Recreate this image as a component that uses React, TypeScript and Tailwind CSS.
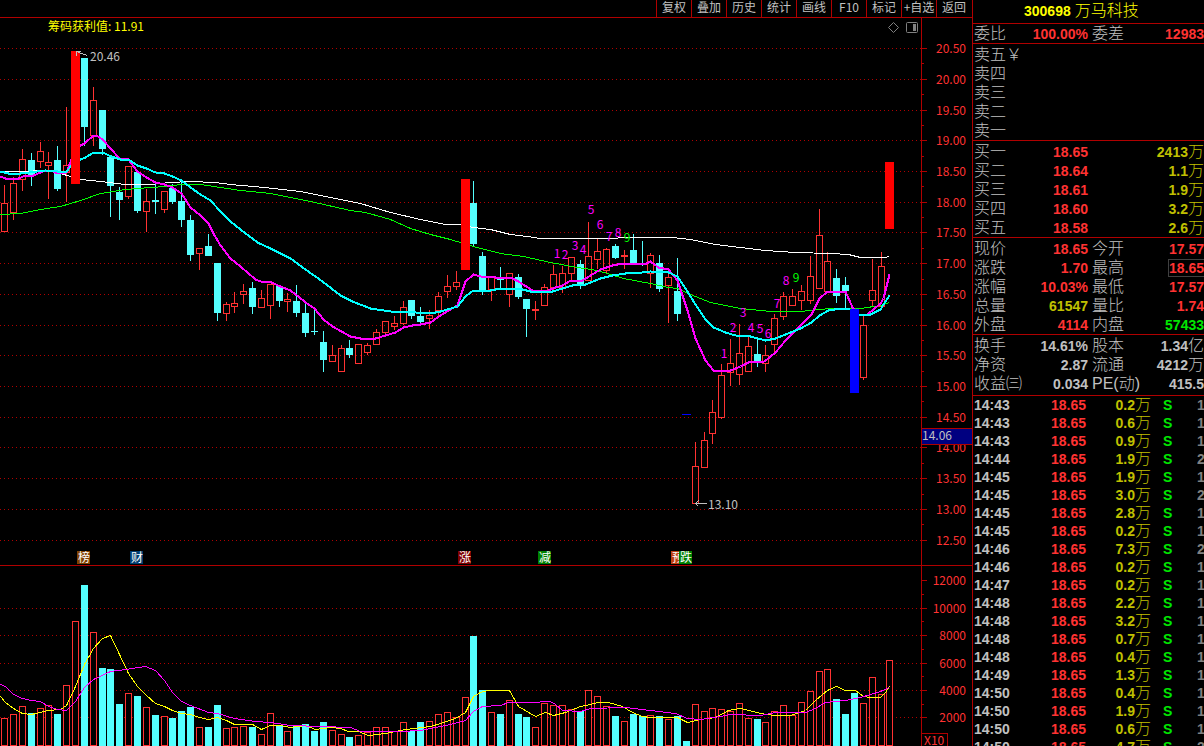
import { Fragment } from 'react'
import clsx from 'clsx'

type Kind = 'up' | 'down' | 'limit' | 'mark'
type Bar = [kind: Kind, high: number, top: number, bottom: number, low: number, volumeTop: number]
type Point = [number, number]
type Cell = { text: string; unit?: string; tone: string; boxed?: boolean }
type QuoteRow = { label: string; value?: Cell; label2?: string; value2?: Cell }

const LINE = '#b00000'
const RED = '#ff3232'
const CYAN = '#54ffff'
const SILVER = '#c0c0c0'
const MAGENTA = '#ff00ff'

const TONE_RED = 'text-[#ff3232]'
const TONE_YELLOW = 'text-[#c0c000]'
const TONE_GREEN = 'text-[#00e600]'
const TONE_SILVER = 'text-[#c0c0c0]'

// Vertical origins of the two panes, all chart rows share one scale
const PRICE_TOP = 18
const VOLUME_TOP = 566

const BARS: Bar[] = [
  ['up', 185, 203, 231, 231, 718],
  ['up', 177, 183, 212, 219, 714],
  ['up', 149, 159, 179, 190, 706],
  ['down', 153, 160, 175, 185, 713],
  ['up', 142, 151, 161, 167, 708],
  ['up', 152, 162, 165, 198, 705],
  ['down', 146, 160, 188, 190, 714],
  ['up', 107, 165, 172, 201, 685],
  ['limit', 51, 51, 183, 183, 621],
  ['down', 58, 58, 126, 145, 585],
  ['up', 87, 100, 135, 145, 632],
  ['down', 110, 110, 148, 154, 668],
  ['down', 157, 157, 185, 216, 669],
  ['down', 187, 192, 199, 219, 704],
  ['up', 166, 166, 196, 198, 693],
  ['down', 170, 172, 210, 212, 696],
  ['up', 189, 201, 211, 231, 707],
  ['down', 182, 200, 201, 213, 715],
  ['up', 191, 191, 209, 212, 716],
  ['down', 184, 188, 201, 203, 718],
  ['down', 181, 201, 219, 226, 711],
  ['down', 215, 220, 254, 260, 707],
  ['up', 248, 248, 253, 269, 727],
  ['down', 234, 246, 255, 255, 727],
  ['down', 263, 263, 312, 320, 705],
  ['up', 302, 304, 313, 320, 728],
  ['up', 292, 303, 306, 312, 727],
  ['up', 284, 291, 294, 303, 726],
  ['down', 282, 288, 306, 313, 727],
  ['up', 290, 298, 307, 307, 734],
  ['up', 284, 284, 305, 318, 713],
  ['down', 286, 286, 300, 306, 726],
  ['up', 293, 299, 301, 311, 731],
  ['down', 285, 301, 312, 316, 725],
  ['down', 303, 313, 332, 336, 724],
  ['down', 309, 331, 331, 334, 731],
  ['down', 331, 342, 359, 371, 722],
  ['up', 345, 355, 361, 361, 730],
  ['up', 345, 348, 371, 371, 734],
  ['down', 340, 348, 354, 357, 737],
  ['up', 344, 344, 363, 363, 735],
  ['up', 343, 345, 352, 354, 732],
  ['up', 329, 332, 344, 344, 727],
  ['up', 321, 321, 332, 336, 727],
  ['up', 316, 323, 326, 329, 731],
  ['up', 301, 307, 323, 324, 722],
  ['down', 300, 300, 315, 318, 731],
  ['down', 307, 316, 321, 322, 722],
  ['up', 310, 315, 318, 328, 721],
  ['up', 292, 296, 310, 315, 714],
  ['up', 275, 286, 291, 297, 712],
  ['up', 271, 282, 286, 289, 717],
  ['limit', 179, 179, 269, 269, 697],
  ['down', 181, 203, 243, 246, 636],
  ['down', 252, 256, 289, 294, 690],
  ['up', 277, 277, 289, 300, 712],
  ['down', 267, 278, 279, 287, 714],
  ['up', 273, 273, 294, 306, 700],
  ['down', 274, 277, 296, 298, 714],
  ['down', 299, 299, 308, 336, 717],
  ['up', 301, 309, 310, 319, 727],
  ['up', 284, 287, 305, 305, 703],
  ['up', 265, 274, 287, 289, 705],
  ['up', 266, 273, 287, 292, 705],
  ['up', 257, 257, 273, 280, 709],
  ['down', 260, 264, 283, 288, 711],
  ['up', 222, 256, 280, 280, 690],
  ['up', 238, 251, 259, 268, 696],
  ['up', 248, 249, 270, 273, 706],
  ['down', 244, 246, 257, 258, 716],
  ['up', 250, 255, 256, 268, 721],
  ['down', 234, 250, 262, 264, 714],
  ['down', 241, 263, 264, 265, 716],
  ['up', 253, 255, 273, 287, 715],
  ['down', 255, 263, 288, 291, 716],
  ['up', 271, 277, 285, 322, 719],
  ['down', 258, 291, 313, 320, 716],
  ['mark', 414, 414, 414, 414, 741],
  ['up', 442, 466, 503, 503, 704],
  ['up', 432, 440, 467, 467, 711],
  ['up', 400, 412, 433, 443, 708],
  ['up', 364, 375, 417, 418, 709],
  ['up', 339, 363, 372, 385, 711],
  ['up', 324, 353, 374, 384, 703],
  ['up', 337, 346, 371, 371, 718],
  ['down', 339, 354, 360, 366, 719],
  ['up', 345, 355, 363, 371, 722],
  ['up', 314, 318, 344, 351, 711],
  ['up', 292, 296, 316, 319, 705],
  ['up', 289, 296, 305, 305, 715],
  ['up', 285, 291, 300, 309, 702],
  ['up', 256, 276, 300, 303, 691],
  ['up', 209, 235, 288, 288, 671],
  ['up', 252, 261, 291, 291, 669],
  ['down', 269, 278, 295, 302, 699],
  ['down', 277, 285, 290, 307, 714],
  ['mark', 309, 309, 392, 392, 693],
  ['up', 315, 325, 377, 379, 703],
  ['up', 259, 290, 300, 306, 677],
  ['up', 252, 266, 306, 306, 694],
  ['limit', 162, 162, 228, 228, 660],
]

const WHITE_LINE: Point[] = [
  [0, 171], [20, 171], [45, 170], [60, 173], [80, 179], [100, 181], [125, 184], [150, 184], [170, 182], [190, 181],
  [215, 182], [230, 184], [264, 187], [300, 191], [330, 197], [360, 203], [390, 212], [420, 219], [445, 224],
  [460, 224], [473, 227], [490, 229], [510, 234], [527, 236], [540, 238], [610, 238], [625, 237], [672, 237],
  [690, 239], [705, 242], [715, 244], [740, 247], [765, 250], [795, 252], [830, 253], [848, 254], [860, 257],
  [884, 257], [889, 256],
]

const GREEN_LINE: Point[] = [
  [0, 214], [20, 213], [40, 209], [60, 206], [80, 200], [100, 193], [125, 189], [150, 187], [165, 186], [180, 184],
  [200, 184], [220, 187], [240, 190], [270, 193], [310, 201], [350, 210], [365, 212], [390, 219], [410, 228],
  [430, 234], [450, 239], [473, 246], [500, 253], [523, 256], [550, 262], [577, 267], [597, 270], [623, 278],
  [650, 283], [668, 287], [677, 288], [690, 294], [710, 302], [740, 308], [770, 311], [800, 311], [830, 308],
  [860, 308], [880, 305], [889, 302],
]

const MAGENTA_LINE: Point[] = [
  [0, 176], [5, 178], [18, 178], [25, 175], [33, 175], [45, 170], [50, 170], [57, 173], [66, 172], [71, 159],
  [80, 145], [84, 143], [93, 135], [96, 135], [102, 139], [111, 149], [119, 158], [128, 159], [137, 171], [146, 177],
  [155, 182], [164, 184], [172, 187], [181, 193], [190, 207], [200, 215], [208, 223], [213, 233], [220, 245],
  [230, 258], [240, 266], [255, 279], [260, 281], [271, 282], [280, 286], [290, 290], [298, 296], [305, 302],
  [314, 308], [323, 319], [332, 326], [341, 331], [350, 336], [360, 338], [375, 338], [385, 335], [395, 332],
  [403, 327], [412, 325], [420, 324], [430, 322], [440, 315], [448, 310], [457, 305], [465, 281], [473, 274],
  [480, 276], [495, 277], [510, 277], [518, 281], [532, 290], [545, 291], [555, 287], [562, 285], [570, 280],
  [582, 280], [590, 275], [600, 269], [612, 265], [622, 263], [646, 263], [650, 261], [658, 267], [668, 269],
  [677, 280], [687, 310], [695, 338], [705, 360], [713, 370], [730, 370], [740, 366], [748, 362], [764, 361],
  [775, 352], [785, 340], [800, 325], [811, 314], [819, 298], [827, 291], [845, 291], [852, 307], [858, 314],
  [867, 314], [880, 303], [883, 298], [889, 274],
]

const CYAN_LINE: Point[] = [
  [0, 171], [8, 173], [20, 173], [45, 170], [57, 171], [66, 171], [71, 165], [80, 159], [85, 157], [93, 152],
  [102, 152], [111, 156], [120, 159], [128, 159], [137, 165], [146, 168], [155, 172], [164, 173], [172, 176],
  [181, 180], [190, 187], [200, 194], [210, 200], [220, 211], [230, 221], [240, 229], [257, 242], [270, 248],
  [290, 258], [305, 269], [322, 281], [340, 295], [352, 301], [370, 308], [390, 311], [415, 312], [430, 313],
  [440, 311], [457, 306], [465, 296], [473, 290], [490, 290], [500, 288], [518, 288], [530, 291], [552, 291],
  [562, 288], [572, 285], [585, 284], [600, 278], [612, 275], [625, 273], [642, 272], [650, 271], [668, 272],
  [677, 276], [685, 288], [695, 304], [705, 319], [713, 327], [725, 332], [735, 335], [750, 336], [765, 340],
  [775, 338], [785, 334], [800, 328], [811, 322], [819, 315], [828, 310], [840, 308], [848, 308], [858, 314],
  [868, 315], [880, 309], [883, 304], [889, 295],
]

const VOLUME_YELLOW: Point[] = [
  [0, 696], [5, 702], [13, 708], [22, 713], [31, 714], [48, 710], [60, 709], [66, 705], [75, 686], [84, 664],
  [93, 648], [102, 638], [110, 635], [119, 654], [128, 673], [137, 686], [146, 695], [155, 703], [164, 706],
  [172, 710], [181, 713], [190, 714], [199, 717], [208, 719], [217, 717], [226, 720], [234, 724], [252, 724],
  [261, 729], [270, 725], [280, 725], [290, 727], [305, 725], [315, 729], [330, 727], [340, 728], [348, 731],
  [358, 731], [368, 735], [385, 733], [405, 729], [430, 726], [440, 723], [455, 718], [465, 712], [473, 696],
  [480, 692], [487, 690], [509, 690], [518, 706], [535, 716], [545, 712], [553, 715], [565, 712], [580, 706],
  [590, 704], [597, 702], [608, 702], [622, 706], [632, 712], [642, 716], [650, 717], [677, 717], [687, 722],
  [700, 719], [715, 717], [728, 710], [740, 708], [765, 714], [775, 715], [790, 715], [805, 710], [815, 700],
  [827, 690], [836, 686], [845, 690], [855, 690], [863, 696], [870, 697], [880, 697], [885, 692], [889, 686],
]

const VOLUME_MAGENTA: Point[] = [
  [0, 684], [5, 686], [13, 694], [22, 698], [31, 700], [40, 701], [48, 706], [57, 709], [66, 710], [75, 701],
  [84, 687], [93, 679], [110, 671], [125, 669], [145, 666], [155, 670], [164, 680], [172, 692], [181, 701],
  [190, 705], [208, 712], [217, 713], [234, 718], [255, 721], [270, 722], [290, 725], [350, 727], [360, 731],
  [400, 731], [420, 730], [440, 726], [450, 724], [465, 720], [473, 711], [482, 706], [500, 705], [508, 702],
  [530, 702], [550, 701], [555, 704], [562, 710], [580, 711], [590, 708], [625, 707], [650, 710], [675, 713],
  [687, 718], [700, 719], [720, 716], [730, 714], [760, 715], [775, 712], [805, 712], [815, 708], [825, 702],
  [845, 700], [860, 697], [870, 694], [880, 691], [889, 687],
]

const COUNTS: [string, number, number][] = [
  ['1', 557, 254], ['2', 565, 255], ['3', 575, 246], ['4', 583, 250], ['5', 591, 210], ['6', 600, 225],
  ['7', 609, 237], ['8', 618, 233], ['9', 627, 238], ['1', 724, 354], ['2', 733, 328], ['3', 743, 313],
  ['4', 751, 328], ['5', 760, 329], ['6', 768, 334], ['7', 777, 304], ['8', 786, 281], ['9', 796, 278],
]

const BADGES: [string, number, string][] = [
  ['榜', 77, '#804000'],
  ['财', 130, '#003c70'],
  ['涨', 458, '#800000'],
  ['减', 538, '#008000'],
  ['预', 671, '#c04010'],
  ['跌', 679, '#008000'],
]

const TOOLS = ['复权', '叠加', '历史', '统计', '画线', 'F10', '标记', '+自选', '返回']

const SELL_ROWS: QuoteRow[] = [
  { label: '卖五￥' },
  { label: '卖四' },
  { label: '卖三' },
  { label: '卖二' },
  { label: '卖一' },
]

const BUY_ROWS: QuoteRow[] = [
  { label: '买一', value: { text: '18.65', tone: TONE_RED }, value2: { text: '2413', unit: '万', tone: TONE_YELLOW } },
  { label: '买二', value: { text: '18.64', tone: TONE_RED }, value2: { text: '1.1', unit: '万', tone: TONE_YELLOW } },
  { label: '买三', value: { text: '18.61', tone: TONE_RED }, value2: { text: '1.9', unit: '万', tone: TONE_YELLOW } },
  { label: '买四', value: { text: '18.60', tone: TONE_RED }, value2: { text: '3.2', unit: '万', tone: TONE_YELLOW } },
  { label: '买五', value: { text: '18.58', tone: TONE_RED }, value2: { text: '2.6', unit: '万', tone: TONE_YELLOW } },
]

const PRICE_ROWS: QuoteRow[] = [
  { label: '现价', value: { text: '18.65', tone: TONE_RED }, label2: '今开', value2: { text: '17.57', tone: TONE_RED } },
  { label: '涨跌', value: { text: '1.70', tone: TONE_RED }, label2: '最高', value2: { text: '18.65', tone: TONE_RED, boxed: true } },
  { label: '涨幅', value: { text: '10.03%', tone: TONE_RED }, label2: '最低', value2: { text: '17.57', tone: TONE_RED } },
  { label: '总量', value: { text: '61547', tone: TONE_YELLOW }, label2: '量比', value2: { text: '1.74', tone: TONE_RED } },
  { label: '外盘', value: { text: '4114', tone: TONE_RED }, label2: '内盘', value2: { text: '57433', tone: TONE_GREEN } },
]

const FINANCE_ROWS: QuoteRow[] = [
  { label: '换手', value: { text: '14.61%', tone: TONE_SILVER }, label2: '股本', value2: { text: '1.34', unit: '亿', tone: TONE_SILVER } },
  { label: '净资', value: { text: '2.87', tone: TONE_SILVER }, label2: '流通', value2: { text: '4212', unit: '万', tone: TONE_SILVER } },
  { label: '收益㈢', value: { text: '0.034', tone: TONE_SILVER }, label2: 'PE(动)', value2: { text: '415.5', tone: TONE_SILVER } },
]

const TICKS: [time: string, volume: string, count: string][] = [
  ['14:43', '0.2', '1'],
  ['14:43', '0.6', '1'],
  ['14:43', '0.9', '1'],
  ['14:44', '1.9', '2'],
  ['14:45', '1.9', '1'],
  ['14:45', '3.0', '2'],
  ['14:45', '2.8', '1'],
  ['14:45', '0.2', '1'],
  ['14:46', '7.3', '2'],
  ['14:46', '0.2', '1'],
  ['14:47', '0.2', '1'],
  ['14:48', '2.2', '1'],
  ['14:48', '3.2', '1'],
  ['14:48', '0.7', '1'],
  ['14:48', '0.4', '1'],
  ['14:49', '1.3', '1'],
  ['14:50', '0.4', '1'],
  ['14:50', '1.9', '1'],
  ['14:50', '0.6', '1'],
  ['14:50', '4.7', '2'],
]

function barX(index: number): number {
  return Math.round(4.2 + index * 8.852)
}

function priceY(price: number): number {
  return Math.floor(48.6 + (20.5 - price) * 61.44)
}

function volumeY(volume: number): number {
  return Math.round(717.4 - (volume - 2000) * 0.01371)
}

function toPoints(points: Point[]): string {
  return points.map(([x, y]) => `${x + 0.5},${y + 0.5}`).join(' ')
}

function GridLine({ y }: { y: number }) {
  return <line x1="0" x2="100%" y1={y + 0.5} y2={y + 0.5} stroke={LINE} strokeDasharray="1 3" />
}

function Candle({ bar, x }: { bar: Bar; x: number }) {
  const [kind, high, top, bottom, low] = bar

  if (kind === 'down') {
    return (
      <g fill={CYAN}>
        <rect x={x} y={high} width={1} height={low - high + 1} />
        <rect x={x - 3} y={top} width={7} height={bottom - top + 1} />
      </g>
    )
  }

  return (
    <g stroke={RED} fill="none">
      {high < top && <line x1={x + 0.5} x2={x + 0.5} y1={high} y2={top} />}
      {low > bottom && <line x1={x + 0.5} x2={x + 0.5} y1={bottom + 1} y2={low + 1} />}
      <rect x={x - 2.5} y={top + 0.5} width={6} height={bottom - top} />
    </g>
  )
}

function PriceChart() {
  const prices = Array.from({ length: 17 }, (_, i) => 20.5 - i * 0.5)

  return (
    <div className="flex h-[548px] shrink-0 border-b border-[#b00000]">
      <svg className="h-full min-w-0 flex-1 text-xs" shapeRendering="crispEdges" role="img" aria-label="K线图">
        <g transform={`translate(0 ${-PRICE_TOP})`}>
          {prices.map((price) => (
            <GridLine key={price} y={priceY(price)} />
          ))}
          {BARS.map((bar, i) =>
            bar[0] === 'up' || bar[0] === 'down' ? <Candle key={i} bar={bar} x={barX(i)} /> : null
          )}
          <g fill="none">
            <polyline points={toPoints(WHITE_LINE)} stroke="#ffffff" />
            <polyline points={toPoints(GREEN_LINE)} stroke="#00ff00" />
            <polyline points={toPoints(MAGENTA_LINE)} stroke={MAGENTA} strokeWidth={2} />
            <polyline points={toPoints(CYAN_LINE)} stroke="#00ffff" strokeWidth={2} />
          </g>
          {BARS.map(([kind, , top, bottom], i) =>
            kind === 'limit' || kind === 'mark' ? (
              <rect
                key={i}
                x={barX(i) - 4}
                y={top}
                width={9}
                height={bottom - top + 1}
                fill={kind === 'limit' ? '#ff0000' : '#0000ff'}
              />
            ) : null
          )}
          {COUNTS.map(([count, x, y]) => (
            <text key={x} x={x} y={y + 4} textAnchor="middle" fill={count === '9' ? '#00ff00' : MAGENTA}>
              {count}
            </text>
          ))}

          <g stroke={SILVER} fill="none">
            <path d="M76.5 51.5L81.5 53.5L87.5 55.5M76.5 55.5V51.5H80.5" />
            <path d="M695.5 503.5H706.5M698.5 500.5L695.5 503.5L698.5 506.5" />
          </g>
          <text x="90" y="61" fill={SILVER}>20.46</text>
          <text x="708" y="509" fill={SILVER}>13.10</text>
          <text x="48" y="31" fill="#ffff00">筹码获利值: 11.91</text>

          {BADGES.map(([text, x, color]) => (
            <Fragment key={text}>
              <rect x={x} y="551" width="13" height="13" fill={color} />
              <text x={x + 1} y="562" fill="#ffffff">{text}</text>
            </Fragment>
          ))}

          <g fill="none" stroke="#808080" shapeRendering="auto">
            <path d="M893.5 22.5L898.5 27.5L893.5 32.5L888.5 27.5Z" />
            <rect x="906.5" y="22.5" width="11" height="10" rx="1" />
            <rect x="913" y="24" width="3" height="7" fill="#808080" stroke="none" />
          </g>
        </g>
      </svg>

      <svg className="h-full w-[51px] shrink-0 text-xs" shapeRendering="crispEdges" role="img" aria-label="价格">
        <g transform={`translate(0 ${-PRICE_TOP})`}>
          <line x1="0.5" x2="0.5" y1="18" y2="566" stroke={LINE} />
          {prices.map((price) => (
            <g key={price}>
              <rect x="1" y={priceY(price)} width="5" height="1" fill={LINE} />
              {price > 12.5 && <rect x="1" y={priceY(price - 0.25)} width="2" height="1" fill={LINE} />}
              <text x="45" y={priceY(price) + 5} textAnchor="end" fill={RED}>
                {price.toFixed(2)}
              </text>
            </g>
          ))}
          <rect x="0" y="428" width="51" height="17" fill={LINE} />
          <rect x="1" y="429" width="50" height="15" fill="#000080" />
          <text x="1" y="440" fill={SILVER}>14.06</text>
        </g>
      </svg>
    </div>
  )
}

function VolumeChart() {
  const levels = [12000, 10000, 8000, 6000, 4000, 2000]

  return (
    <div className="flex min-h-0 flex-1">
      <svg className="h-full min-w-0 flex-1" shapeRendering="crispEdges" role="img" aria-label="成交量">
        <g transform={`translate(0 ${-VOLUME_TOP})`}>
          {levels.slice(1).map((level) => (
            <GridLine key={level} y={volumeY(level)} />
          ))}
          {BARS.map(([kind, , , , , top], i) =>
            kind === 'down' || kind === 'mark' ? (
              <rect key={i} x={barX(i) - 3} y={top} width={7} height={746 - top} fill={CYAN} />
            ) : (
              <rect key={i} x={barX(i) - 2.5} y={top + 0.5} width={6} height={745 - top} fill="#000000" stroke={RED} />
            )
          )}
          <polyline points={toPoints(VOLUME_YELLOW)} stroke="#ffff00" fill="none" />
          <polyline points={toPoints(VOLUME_MAGENTA)} stroke={MAGENTA} fill="none" />
        </g>
      </svg>

      <svg className="h-full w-[51px] shrink-0 text-xs" shapeRendering="crispEdges" role="img" aria-label="成交量刻度">
        <line x1="0.5" x2="0.5" y1="0" y2="100%" stroke={LINE} />
        <g transform={`translate(0 ${-VOLUME_TOP})`}>
          {levels.map((level) => (
            <g key={level}>
              <rect x="1" y={volumeY(level)} width="5" height="1" fill={LINE} />
              {level > 2000 && <rect x="1" y={volumeY(level - 1000)} width="2" height="1" fill={LINE} />}
              <text x="45" y={volumeY(level) + 5} textAnchor="end" fill={RED}>
                {level}
              </text>
            </g>
          ))}
          <path d="M0 733.5H26.5V746" fill="none" stroke={LINE} />
          <text x="3" y="745" fill={RED}>X10</text>
        </g>
      </svg>
    </div>
  )
}

function Value({ cell }: { cell: Cell }) {
  return (
    <span className={clsx('inline-block', cell.tone, cell.boxed && 'border border-r-0 border-[#404040] leading-4')}>
      {cell.text}
      {cell.unit && <span className="text-base leading-none font-light">{cell.unit}</span>}
    </span>
  )
}

function QuoteTable({ rows, className }: { rows: QuoteRow[]; className?: string }) {
  return (
    <div className={clsx('overflow-hidden border-b border-[#b00000] pl-px', className)}>
      <table className="w-full table-fixed border-collapse">
        <tbody>
          {rows.map((row) => (
            <tr key={row.label} className="h-[19px] whitespace-nowrap leading-[18px]">
              <th scope="row" className="w-12 p-0 text-left text-base leading-[18px] font-light text-[#c0c0c0]">
                {row.label}
              </th>
              <td className="w-[66px] p-0 text-right text-sm leading-[18px] font-bold">
                {row.value && <Value cell={row.value} />}
              </td>
              <td className="w-[52px] p-0 pl-1 text-left text-base leading-[18px] font-light text-[#c0c0c0]">
                {row.label2}
              </td>
              <td className="p-0 text-right text-sm leading-[18px] font-bold">
                {row.value2 && <Value cell={row.value2} />}
              </td>
            </tr>
          ))}
        </tbody>
      </table>
    </div>
  )
}

function TickTable() {
  return (
    <div className="min-h-0 flex-1 overflow-hidden pl-px">
      <table className="w-full table-fixed border-collapse text-sm font-bold">
        <tbody>
          {TICKS.map(([time, volume, count], i) => (
            <tr key={i} className="h-[18px] whitespace-nowrap leading-[18px]">
              <td className="w-12 p-0 text-[#c0c0c0]">{time}</td>
              <td className="w-16 p-0 text-right text-[#ff3232]">18.65</td>
              <td className="w-[65px] p-0 text-right text-[#c0c000]">
                {volume}
                <span className="text-base leading-none font-light">万</span>
              </td>
              <td className="w-[46px] p-0 pl-3 text-[#00e600]">S</td>
              <td className="overflow-hidden p-0 text-[#808080]">{count}</td>
            </tr>
          ))}
        </tbody>
      </table>
    </div>
  )
}

export default function App() {
  return (
    <div className="flex h-screen overflow-hidden bg-black font-['Liberation_Sans','Noto_Sans_CJK_SC',sans-serif]">
      <main className="flex min-w-0 flex-1 flex-col font-['Noto_Sans_CJK_SC',sans-serif]">
        <nav className="flex h-[18px] shrink-0 justify-end border-b border-[#b00000] pr-px">
          {TOOLS.map((tool) => (
            <button
              key={tool}
              type="button"
              className="w-[35px] border-l border-[#b00000] pb-1 text-center text-xs leading-[14px] whitespace-nowrap text-[#c0c0c0]"
            >
              {tool}
            </button>
          ))}
        </nav>
        <PriceChart />
        <VolumeChart />
      </main>

      <aside className="flex w-[232px] shrink-0 flex-col overflow-hidden border-l border-[#b00000]">
        <h1 className="flex h-6 shrink-0 items-center gap-1 border-b border-[#b00000] pb-0.5 pl-[51px] text-sm font-bold text-[#ffff00]">
          300698 <span className="text-base leading-none font-light">万马科技</span>
        </h1>
        <QuoteTable
          rows={[
            {
              label: '委比',
              value: { text: '100.00%', tone: TONE_RED },
              label2: '委差',
              value2: { text: '12983', tone: TONE_RED },
            },
          ]}
        />
        <QuoteTable rows={SELL_ROWS} className="pt-px" />
        <QuoteTable rows={BUY_ROWS} className="pt-px" />
        <QuoteTable rows={PRICE_ROWS} className="pt-px" />
        <QuoteTable rows={FINANCE_ROWS} className="pt-px pb-0.5" />
        <TickTable />
      </aside>
    </div>
  )
}
